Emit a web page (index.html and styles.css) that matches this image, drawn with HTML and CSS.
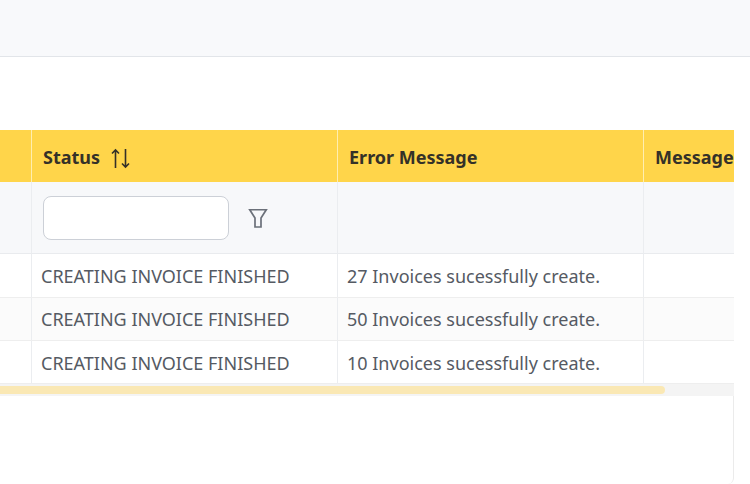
FILE: index.html
```html
<!DOCTYPE html>
<html lang="en">
<head>
    <meta charset="UTF-8">
    <title>Invoices</title>
    <link rel="stylesheet" href="styles.css">
</head>
<body>

<div class="topbar"></div>

<div class="card">
    <div class="table-wrap">
        <table class="grid">
            <colgroup>
                <col class="col-first">
                <col class="col-wide">
                <col class="col-wide">
                <col class="col-last">
            </colgroup>
            <thead>
                <tr class="head-row">
                    <th></th>
                    <th>
                        <span class="head-label">Status
                            <svg class="sort-icon" width="22" height="22" viewBox="0 0 22 22" fill="none" stroke="currentColor" stroke-width="1.6">
                                <path d="M6.500 21V3M3 6.500L6.500 3 10 6.500"/>
                                <path d="M16.500 2v18M13 16.500l3.500 3.500 3.500-3.500"/>
                            </svg>
                        </span>
                    </th>
                    <th>Error Message</th>
                    <th>Message</th>
                </tr>
                <tr class="filter-row">
                    <td></td>
                    <td>
                        <div class="filter-box">
                            <input class="filter-input" type="text">
                            <svg class="filter-icon" width="20" height="20" viewBox="0 0 20 20" fill="none" stroke="currentColor" stroke-width="1.700">
                                <path d="M1.750 1.750h16.500L13 10v9H7v-9z"/>
                            </svg>
                        </div>
                    </td>
                    <td></td>
                    <td></td>
                </tr>
            </thead>
            <tbody>
                <tr class="row row-first">
                    <td></td>
                    <td>CREATING INVOICE FINISHED</td>
                    <td>27 Invoices sucessfully create.</td>
                    <td></td>
                </tr>
                <tr class="row row-alt">
                    <td></td>
                    <td>CREATING INVOICE FINISHED</td>
                    <td>50 Invoices sucessfully create.</td>
                    <td></td>
                </tr>
                <tr class="row row-last">
                    <td></td>
                    <td>CREATING INVOICE FINISHED</td>
                    <td>10 Invoices sucessfully create.</td>
                    <td></td>
                </tr>
            </tbody>
        </table>
    </div>
    <div class="scroll-track">
        <div class="scroll-thumb"></div>
    </div>
    <div class="card-foot"></div>
</div>

</body>
</html>
```

FILE: styles.css
```css
body {
    font-family: 'Noto Sans', 'Open Sans', sans-serif;
    margin: 0;
    background-color: #fff;
    color: #555a63;
    overflow: hidden;
}

.topbar {
    height: 56px;
    background-color: #f8f9fb;
    border-bottom: 1px solid #e2e5e9;
}

.card {
    width: 734px;
    margin-top: 73px;
}

.table-wrap {
    overflow: hidden;
}

.grid {
    width: 1000px;
    border-collapse: separate;
    border-spacing: 0;
    table-layout: fixed;
    font-size: 18px;
}

.col-first {
    width: 31px;
}

.col-wide {
    width: 306px;
}

.col-last {
    width: 357px;
}

th, td {
    box-sizing: border-box;
    padding: 0 0 0 9px;
    text-align: left;
    white-space: nowrap;
    border-left: 1px solid #ebedf0;
}

th:first-child, td:first-child {
    border-left: none;
}

.head-row {
    height: 52px;
    background-color: #ffd54a;
}

.head-row th {
    padding-top: 2px;
    padding-left: 11px;
    color: #343128;
    font-weight: 700;
    border-left-color: #ffeeb0;
}

.head-label {
    display: flex;
    align-items: center;
    gap: 9px;
}

.sort-icon {
    margin-top: 2px;
    color: #343128;
}

.filter-row {
    height: 72px;
    background-color: #f7f8fa;
}

.filter-row td {
    border-bottom: 1px solid #e9ebee;
}

.filter-box {
    display: flex;
    align-items: center;
    gap: 19px;
    padding-left: 2px;
}

.filter-input {
    width: 186px;
    height: 44px;
    box-sizing: border-box;
    border: 1px solid #ccd0d7;
    border-radius: 8px;
    background-color: #fff;
}

.filter-icon {
    color: #6b7079;
}

.row {
    height: 43px;
    background-color: #fff;
}

.row td {
    border-bottom: 1px solid #eeeeee;
}

.row-first {
    height: 44px;
}

.row-alt {
    background-color: #fbfbfb;
}

.row-last td {
    padding-top: 2px;
}

.scroll-track {
    height: 12px;
    padding-top: 2px;
    box-sizing: border-box;
    background-color: #f4f4f4;
}

.scroll-thumb {
    width: 665px;
    height: 8px;
    border-radius: 0 4px 4px 0;
    background-color: #fae8b4;
}

.card-foot {
    height: 88px;
    box-sizing: border-box;
    border-right: 1px solid #ebebeb;
    border-bottom-right-radius: 6px;
}
```
